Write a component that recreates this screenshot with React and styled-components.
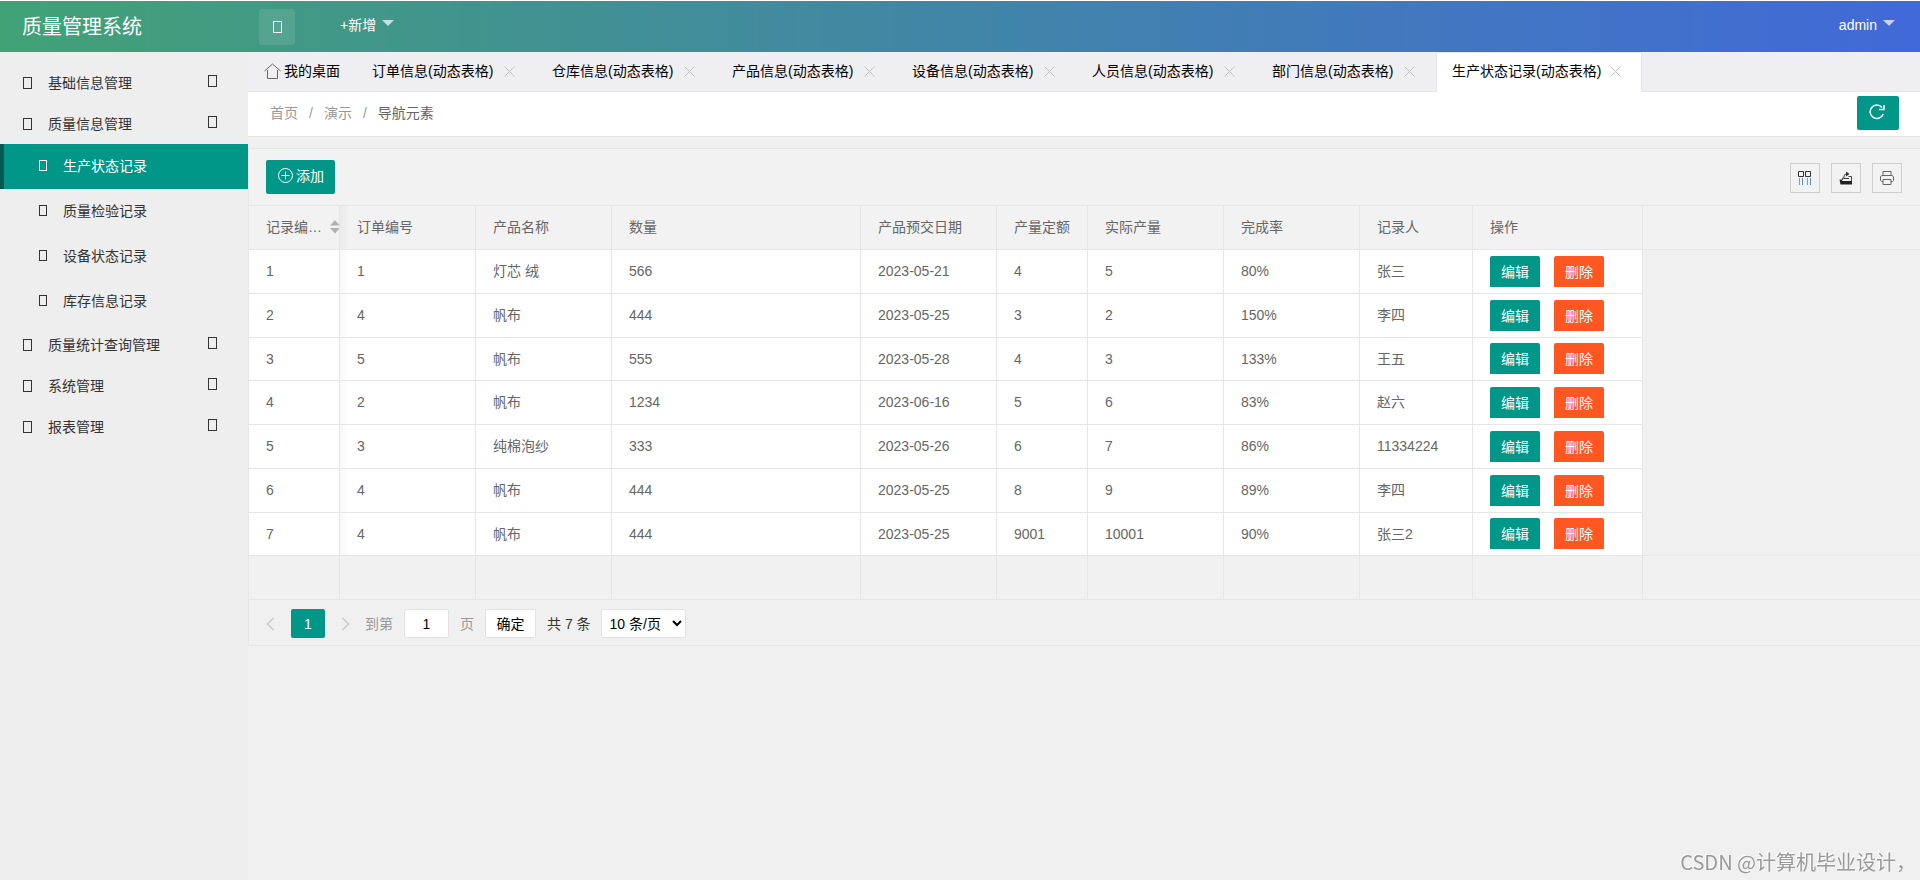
import React from 'react';
import styled, { createGlobalStyle, css } from 'styled-components';

const GlobalStyle = createGlobalStyle`
  * { box-sizing: border-box; }
  body {
    margin: 0;
    background: #f0f0f0;
    color: #333;
    font: 14px/20px "Liberation Sans", "Noto Sans CJK SC", sans-serif;
  }
  button, input, select { font: inherit; margin: 0; }
  a { color: inherit; text-decoration: none; }
`;

const Page = styled.div`
  min-height: 100vh;
  display: flex;
  flex-direction: column;
  border-top: 1px solid #fff;
`;

const Header = styled.header`
  height: 51px;
  display: flex;
  align-items: center;
  padding: 0 25px 0 22px;
  color: #fff;
  background: linear-gradient(to right, #41a276, #4169d8);
`;

const Brand = styled.h1`
  width: 237px;
  margin: 0;
  font-size: 20px;
  line-height: 28px;
  font-weight: 400;
`;

const ToggleButton = styled.button`
  width: 36px;
  height: 36px;
  display: flex;
  align-items: center;
  justify-content: center;
  padding: 0;
  border: 0;
  border-radius: 3px;
  color: #fff;
  background: rgba(255, 255, 255, 0.1);
`;

const MenuButton = styled.button`
  display: flex;
  align-items: center;
  gap: 6px;
  padding: 0 0 4px;
  margin-left: ${(p) => (p.$end ? 'auto' : '45px')};
  border: 0;
  color: #fff;
  background: none;
`;

const Caret = styled.span`
  border: 6px solid transparent;
  border-top-color: rgba(255, 255, 255, 0.7);
  border-bottom: 0;
  margin-bottom: 4px;
`;

const Glyph = styled.span`
  flex: none;
  width: ${(p) => (p.$small ? 8 : 9)}px;
  height: ${(p) => (p.$small ? 11 : 12)}px;
  border: 1px solid currentColor;
`;

const Body = styled.div`
  flex: 1;
  display: flex;
`;

const Sidebar = styled.nav`
  flex: none;
  width: 248px;
  padding-top: 10px;
  background: #eee;
`;

const MenuItem = styled.a`
  height: 41px;
  display: flex;
  align-items: center;
  gap: 16px;
  padding: 0 31px 0 23px;
  & > :last-child { margin: 0 0 3px auto; }
`;

const SubItem = styled.a`
  height: 45px;
  display: flex;
  align-items: center;
  gap: 16px;
  padding: 0 0 2px 35px;
  border-left: 4px solid transparent;
  ${(p) => p.$active && css`
    color: #fff;
    background: #009688;
    border-left-color: #065950;
  `}
`;

const Main = styled.main`
  flex: 1;
  min-width: 0;
`;

const Tabs = styled.div`
  height: 40px;
  display: flex;
  background: #efeef0;
  border-bottom: 1px solid #e4e4e4;
`;

const Tab = styled.div`
  flex: none;
  display: flex;
  align-items: center;
  justify-content: space-between;
  width: 180px;
  height: 40px;
  padding: 0 20px 3px 15px;
  color: #000;
  white-space: nowrap;
  border: 1px solid transparent;
  border-bottom: 0;
  ${(p) => p.$home && css`
    padding-right: 15px;
    width: 108px;
  `}
  ${(p) => p.$active && css`
    width: 206px;
    background: #fff;
    border-color: #e6e6e6;
    border-radius: 2px 2px 0 0;
  `}
`;

const CloseButton = styled.button`
  display: flex;
  padding: 0;
  border: 0;
  color: #c2c2c2;
  background: none;
`;

const CrumbBar = styled.div`
  height: 45px;
  display: flex;
  align-items: center;
  justify-content: space-between;
  padding: 0 21px 2px 22px;
  background: #fff;
  border-bottom: 1px solid #e5e5e5;
`;

const Crumbs = styled.div`
  display: flex;
  gap: 11px;
  color: #999;
  & > :last-child { color: #666; }
`;

const PrimaryButton = styled.button`
  height: 34px;
  display: flex;
  align-items: center;
  gap: 3px;
  padding: 0 ${(p) => (p.$wide ? 14 : 11)}px 3px 12px;
  border: 0;
  border-radius: 2px;
  color: #fff;
  background: #009688;
`;

const TableView = styled.section`
  margin-top: 11px;
  border: 1px solid #e6e6e6;
  border-right: 0;
`;

const Toolbar = styled.div`
  height: 56px;
  display: flex;
  align-items: center;
  justify-content: space-between;
  padding: 0 18px 0 17px;
  background: #f2f2f2;
`;

const Tools = styled.div`
  display: flex;
  gap: 11px;
  padding-top: 2px;
`;

const ToolButton = styled.button`
  width: 30px;
  height: 30px;
  display: flex;
  align-items: center;
  justify-content: center;
  padding: 0;
  border: 1px solid #ccc;
  color: #333;
  background: none;
`;

const Table = styled.table`
  width: 100%;
  table-layout: fixed;
  border-collapse: separate;
  border-spacing: 0;
  border-top: 1px solid #e6e6e6;
  color: #666;
`;

const Cell = styled.td`
  padding: 0 0 1px 17px;
  text-align: left;
  font-weight: 400;
  white-space: nowrap;
  background: #fff;
  border-right: 1px solid #e6e6e6;
  border-bottom: 1px solid #e6e6e6;
`;

const pinned = css`
  & > ${Cell}:nth-child(2) {
    background-image: linear-gradient(to right, rgba(0, 0, 0, 0.03), transparent);
    background-size: 9px 100%;
    background-repeat: no-repeat;
  }
`;

const HeadRow = styled.tr`
  height: 44px;
  & > ${Cell} { background: #f2f2f2; padding-bottom: 2px; }
  ${pinned}
`;

const Filler = styled(Cell)`
  && { border-right: 0; }
`;

const Row = styled.tr`
  height: 44px;
  &:nth-child(4n + 3) { height: 43px; }
  & > ${Filler} { background: #f0f0f0; border-bottom: 0; }
  &:nth-last-child(2) > ${Filler} { border-bottom: 1px solid #e6e6e6; }
  ${pinned}
`;

const EmptyRow = styled.tr`
  height: 44px;
  & > ${Cell} { background: #f1f1f1; }
`;

const SortHead = styled.div`
  display: flex;
  align-items: center;
  justify-content: space-between;
`;

const Actions = styled.div`
  display: flex;
  gap: 14px;
`;

const RowButton = styled.button`
  height: 31px;
  padding: 1px 11px 0;
  border: 0;
  border-radius: 2px 2px 0 0;
  color: #fff;
  background: ${(p) => (p.$danger ? '#ff5722' : '#009688')};
`;

const Pager = styled.div`
  height: 45px;
  display: flex;
  align-items: center;
  padding: 2px 17px 0 11px;
  color: #999;
`;

const PageArrow = styled.button`
  width: 20px;
  display: flex;
  justify-content: center;
  padding: 0;
  border: 0;
  color: #ccc;
  background: none;
`;

const PageCurrent = styled.button`
  width: 34px;
  height: 29px;
  margin: 0 10px 0 11px;
  padding: 0;
  border: 0;
  border-radius: 2px;
  color: #fff;
  background: #009688;
`;

const PageLabel = styled.label`
  display: flex;
  align-items: center;
  gap: 11px;
  margin-left: 10px;
`;

const fieldBox = css`
  height: 29px;
  padding: 0;
  border: 1px solid #e2e2e2;
  border-radius: 2px;
  color: #000;
  background: #fff;
`;

const PageInput = styled.input`
  ${fieldBox}
  width: 45px;
  text-align: center;
`;

const ConfirmButton = styled.button`
  ${fieldBox}
  width: 51px;
  margin: 0 11px;
`;

const Total = styled.span`
  color: #333;
`;

const PageSize = styled.select`
  ${fieldBox}
  width: 85px;
  padding-left: 4px;
  margin-left: 10px;
`;

const Watermark = styled.div`
  position: fixed;
  right: 4px;
  bottom: 4px;
  font: 20px/28px "Noto Sans CJK SC", sans-serif;
  color: #999;
  text-shadow: -1px -1px 0 #fff;
`;

const Icon = ({ size = 16, width = 1, children }) => (
  <svg width={size} height={size} viewBox={`0 0 ${size} ${size}`} fill="none" stroke="currentColor" strokeWidth={width} aria-hidden="true">
    {children}
  </svg>
);

const HomeIcon = () => (
  <Icon size={17}><g stroke="#666"><path d="M.5 8 8.500 1 16.500 8" /><path d="M3.500 7v8.500h10V7" /></g></Icon>
);
const CloseIcon = () => <Icon size={11}><path d="M.5.5l10 10M10.500.5l-10 10" /></Icon>;
const RefreshIcon = () => (
  <Icon width={1.5}><path d="M14.200 10A6.700 6.700 0 1 1 13 3.500" /><path d="M15 1v4.500h-5" /></Icon>
);
const AddIcon = () => <Icon size={15}><circle cx="7.500" cy="7.500" r="7" /><path d="M3.500 7.500h8M7.500 3.500v8" /></Icon>;
const ColumnsIcon = () => (
  <Icon size={14}>
    <path d="M.5.5h5v5h-5zM7.500.5h5v5h-5z" stroke="#333" />
    <path d="M1.500 7v7M9.500 7v7" stroke="#b98f5c" />
    <path d="M4.500 7v7M12.500 7v7" stroke="#5f8fc0" />
  </Icon>
);
const ExportIcon = () => (
  <Icon size={14}>
    <path d="M.5 8.500h2l1 1.500H13v3.500H1.500z" fill="#222" stroke="none" />
    <path d="M3.500 9V7h1.500M9.500 5.500h3V10M5 7.500V5q0-2 3-2" stroke="#444" />
    <path d="M7 .5 10.500 3 7 5.500zM5 7h5v1H5z" fill="#333" stroke="none" />
  </Icon>
);
const PrintIcon = () => (
  <Icon size={14}>
    <g stroke="#666"><path d="M3 4V.5h8V4M3 10.500H1.500l-1-1v-4l1.500-1h10l1.500 1v4l-1 1H11" /><path d="M3 8.500h8v5H3z" /></g>
  </Icon>
);
const SortIcon = () => (
  <svg width="9" height="14" viewBox="0 0 9 14" fill="#b2b2b2" aria-hidden="true"><path d="M0 5.500 5 0l5 5.500zM0 8h10l-5 5.500z" /></svg>
);
const Chevron = ({ right }) => (
  <svg width="9" height="14" viewBox="0 0 9 14" fill="none" stroke="currentColor" strokeWidth="1.500" aria-hidden="true">
    <path d={right ? 'M1.500 1l6 6-6 6' : 'M7.500 1l-6 6 6 6'} />
  </svg>
);

const MENU = [
  { name: '基础信息管理' },
  { name: '质量信息管理', items: ['生产状态记录', '质量检验记录', '设备状态记录', '库存信息记录'] },
  { name: '质量统计查询管理' },
  { name: '系统管理' },
  { name: '报表管理' },
];
const TABS = ['订单信息', '仓库信息', '产品信息', '设备信息', '人员信息', '部门信息', '生产状态记录'];
const COLUMNS = [
  ['记录编…', 91], ['订单编号', 136], ['产品名称', 136], ['数量', 249], ['产品预交日期', 136],
  ['产量定额', 91], ['实际产量', 136], ['完成率', 136], ['记录人', 113], ['操作', 170],
];
const ROWS = [
  ['1', '1', '灯芯 绒', '566', '2023-05-21', '4', '5', '80%', '张三'],
  ['2', '4', '帆布', '444', '2023-05-25', '3', '2', '150%', '李四'],
  ['3', '5', '帆布', '555', '2023-05-28', '4', '3', '133%', '王五'],
  ['4', '2', '帆布', '1234', '2023-06-16', '5', '6', '83%', '赵六'],
  ['5', '3', '纯棉泡纱', '333', '2023-05-26', '6', '7', '86%', '11334224'],
  ['6', '4', '帆布', '444', '2023-05-25', '8', '9', '89%', '李四'],
  ['7', '4', '帆布', '444', '2023-05-25', '9001', '10001', '90%', '张三2'],
];

export default function App() {
  return (
    <Page>
      <GlobalStyle />
      <Header>
        <Brand>质量管理系统</Brand>
        <ToggleButton aria-label="折叠菜单"><Glyph /></ToggleButton>
        <MenuButton>+新增<Caret /></MenuButton>
        <MenuButton $end>admin<Caret /></MenuButton>
      </Header>
      <Body>
        <Sidebar>
          {MENU.map((group) => (
            <React.Fragment key={group.name}>
              <MenuItem href="#"><Glyph />{group.name}<Glyph /></MenuItem>
              {group.items?.map((item, i) => (
                <SubItem href="#" key={item} $active={i === 0}><Glyph $small />{item}</SubItem>
              ))}
            </React.Fragment>
          ))}
        </Sidebar>
        <Main>
          <Tabs>
            <Tab $home><HomeIcon />我的桌面</Tab>
            {TABS.map((name, i) => (
              <Tab key={name} $active={i === TABS.length - 1}>
                {name}(动态表格)
                <CloseButton aria-label="关闭"><CloseIcon /></CloseButton>
              </Tab>
            ))}
          </Tabs>
          <CrumbBar>
            <Crumbs>
              <a href="#">首页</a><span>/</span><a href="#">演示</a><span>/</span><span>导航元素</span>
            </Crumbs>
            <PrimaryButton $wide aria-label="刷新"><RefreshIcon /></PrimaryButton>
          </CrumbBar>
          <TableView>
            <Toolbar>
              <PrimaryButton><AddIcon />添加</PrimaryButton>
              <Tools>
                <ToolButton aria-label="筛选列"><ColumnsIcon /></ToolButton>
                <ToolButton aria-label="导出"><ExportIcon /></ToolButton>
                <ToolButton aria-label="打印"><PrintIcon /></ToolButton>
              </Tools>
            </Toolbar>
            <Table>
              <colgroup>
                {COLUMNS.map(([name, width]) => <col key={name} width={width} />)}
                <col />
              </colgroup>
              <thead>
                <HeadRow>
                  {COLUMNS.map(([name], i) => (
                    <Cell as="th" key={name}>
                      {i === 0 ? <SortHead>{name}<SortIcon /></SortHead> : name}
                    </Cell>
                  ))}
                  <Filler />
                </HeadRow>
              </thead>
              <tbody>
                {ROWS.map((row) => (
                  <Row key={row[0]}>
                    {row.map((value, i) => <Cell key={i}>{value}</Cell>)}
                    <Cell>
                      <Actions>
                        <RowButton>编辑</RowButton>
                        <RowButton $danger>删除</RowButton>
                      </Actions>
                    </Cell>
                    <Filler />
                  </Row>
                ))}
                <EmptyRow>
                  {COLUMNS.map(([name]) => <Cell key={name} />)}
                  <Filler />
                </EmptyRow>
              </tbody>
            </Table>
            <Pager>
              <PageArrow aria-label="上一页"><Chevron /></PageArrow>
              <PageCurrent>1</PageCurrent>
              <PageArrow aria-label="下一页"><Chevron right /></PageArrow>
              <PageLabel>到第<PageInput defaultValue="1" />页</PageLabel>
              <ConfirmButton>确定</ConfirmButton>
              <Total>共 7 条</Total>
              <PageSize aria-label="每页条数" defaultValue="10">
                <option value="10">10 条/页</option>
                <option value="20">20 条/页</option>
              </PageSize>
            </Pager>
          </TableView>
        </Main>
      </Body>
      <Watermark>CSDN @计算机毕业设计，</Watermark>
    </Page>
  );
}
